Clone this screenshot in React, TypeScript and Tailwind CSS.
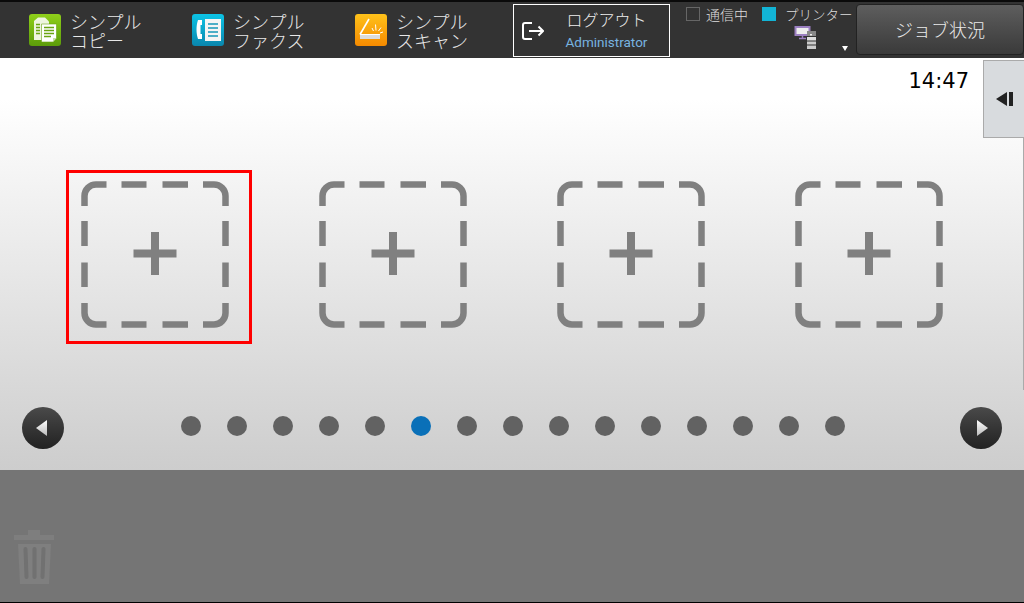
import React from "react";

const jp = "font-['Noto_Sans_CJK_JP','Noto_Sans',sans-serif]";

const CopyIcon = () => (
  <svg width="32" height="32" viewBox="0 0 32 32" aria-hidden="true">
    <defs>
      <linearGradient id="copyBg" x1="0" y1="0" x2="0" y2="1">
        <stop offset="0" stopColor="#8fd01a" />
        <stop offset="1" stopColor="#5c9c0a" />
      </linearGradient>
    </defs>
    <rect width="32" height="32" rx="3" fill="url(#copyBg)" />
    <path d="M5 7 9 3.500H16L20 7.500V26H5Z" fill="#eef5e0" />
    <path d="M12.500 10H27.500V24L24 28H12.500Z" fill="#fff" stroke="#6aa512" strokeWidth="0.6" />
    <path d="M24 28V24H27.500Z" fill="#c9dfa6" />
    <path d="M7 10.500h4M7 13.500h4M7 16.500h4M7 19.500h4" stroke="#6aa512" strokeWidth="1.3" />
    <path d="M15 13.500h10M15 16.500h10M15 19.500h10M15 22.500h7" stroke="#6aa512" strokeWidth="1.3" />
  </svg>
);

const FaxIcon = () => (
  <svg width="32" height="32" viewBox="0 0 32 32" aria-hidden="true">
    <defs>
      <linearGradient id="faxBg" x1="0" y1="0" x2="0" y2="1">
        <stop offset="0" stopColor="#0cc4e6" />
        <stop offset="1" stopColor="#0a86ad" />
      </linearGradient>
    </defs>
    <rect width="32" height="32" rx="3" fill="url(#faxBg)" />
    <rect x="13" y="5" width="16" height="22" fill="#f4f4f4" />
    <path d="M16 10h10M16 14h10M16 18h10M16 22h10" stroke="#1497b8" strokeWidth="1.6" />
    <path d="M6 6h4v5H8.500v9H10v5H6c-1-3-1.500-6-1.500-9.500S5 9 6 6z" fill="#fff" />
  </svg>
);

const ScanIcon = () => (
  <svg width="32" height="32" viewBox="0 0 32 32" aria-hidden="true">
    <defs>
      <linearGradient id="scanBg" x1="0" y1="0" x2="0" y2="1">
        <stop offset="0" stopColor="#ffc21a" />
        <stop offset="1" stopColor="#f58a00" />
      </linearGradient>
    </defs>
    <rect width="32" height="32" rx="3" fill="url(#scanBg)" />
    <path d="M5 20.500 14 5" stroke="#fff" strokeWidth="1.6" fill="none" />
    <path d="M5 20.500h20" stroke="#fff" strokeWidth="1" />
    <rect x="5" y="21" width="20" height="4" fill="#dcdcdc" />
    <path d="M18.500 17l-1.500-3M21 16.500l-.500-6M23.500 17l2.500-3.500M25 19l3-1" stroke="#fff" strokeWidth="1" />
  </svg>
);

const LogoutIcon = () => (
  <svg width="22" height="18" viewBox="0 0 22 18" fill="none" stroke="#fff" strokeWidth="2" aria-hidden="true">
    <path d="M10 1H3a2 2 0 0 0-2 2v12a2 2 0 0 0 2 2h7" />
    <path d="M7 9h14M16.500 4.500 21 9l-4.500 4.500" />
  </svg>
);

const PrinterIcon = () => (
  <svg width="26" height="26" viewBox="0 0 26 26" aria-hidden="true">
    <rect x="2.500" y="1" width="14" height="8" fill="#eee" stroke="#9b7fc0" strokeWidth="2" />
    <path d="M9.500 10v2M6 12.500h7" stroke="#9b7fc0" strokeWidth="1.500" />
    <rect x="14" y="5" width="9" height="18" fill="#333" />
    <rect x="14" y="5" width="9" height="5" fill="#888" />
    <rect x="17" y="8" width="2" height="1.500" fill="#eee" />
    <rect x="14" y="11" width="9" height="3.500" fill="#ddd" />
    <rect x="14" y="15.500" width="9" height="3" fill="#ccc" />
    <rect x="14" y="19.500" width="9" height="3.500" fill="#ccc" />
  </svg>
);

const AddSlot = () => (
  <svg width="148" height="147" viewBox="0 0 148 147" aria-hidden="true">
    <g fill="none" stroke="#808080" strokeWidth="6.500">
      <path d="M3.500 25V15A11.500 11.500 0 0 1 15 3.500H25.500" />
      <path d="M40.500 3.500H65.500M81.500 3.500H107" />
      <path d="M122 3.500H133A11.500 11.500 0 0 1 144.500 15V25" />
      <path d="M3.500 40V65M3.500 81.500V106" />
      <path d="M144.500 40V65M144.500 81.500V106" />
      <path d="M3.500 122V132A11.500 11.500 0 0 0 15 143.500H25.500" />
      <path d="M40.500 143.500H65.500M81.500 143.500H107" />
      <path d="M122 143.500H133A11.500 11.500 0 0 0 144.500 132V122" />
    </g>
    <path d="M74 51V94M52.500 72.500H95.500" stroke="#808080" strokeWidth="8" />
  </svg>
);

const TrashIcon = () => (
  <svg width="40" height="54" viewBox="0 0 40 54" aria-hidden="true">
    <rect x="14" y="0" width="12" height="5" fill="#7e7e7e" />
    <rect x="0" y="5" width="40" height="5" fill="#7e7e7e" />
    <path d="M4 14H37L35 54H6Z" fill="#7f7f7f" />
    <path d="M11.500 19l1 28M20.500 19v28M29.500 19l-1 28" stroke="#717171" strokeWidth="4" strokeLinecap="round" />
  </svg>
);

const NavButton = ({ dir }: { dir: "left" | "right" }) => (
  <button type="button" className="w-[42px] h-[42px] rounded-full bg-gradient-to-b from-[#4a4a4a] to-[#222] flex items-center justify-center">
    <svg width="14" height="16" viewBox="0 0 14 16" aria-hidden="true">
      <defs>
        <linearGradient id={`arrow-${dir}`} x1="0" y1="0" x2="0" y2="1">
          <stop offset="0" stopColor="#fff" />
          <stop offset="1" stopColor="#bbb" />
        </linearGradient>
      </defs>
      <path d={dir === "left" ? "M11 0V16L0 8Z" : "M3 0V16L14 8Z"} fill={`url(#arrow-${dir})`} />
    </svg>
  </button>
);

const modes = [
  { icon: <CopyIcon />, text: "シンプル\nコピー", width: "w-[163px]" },
  { icon: <FaxIcon />, text: "シンプル\nファクス", width: "w-[163px]" },
  { icon: <ScanIcon />, text: "シンプル\nスキャン", width: "w-[187px]" },
];

export default function App() {
  return (
    <div className={`w-[1024px] h-[603px] overflow-hidden flex flex-col ${jp}`}>
      {/* Top bar */}
      <header className="h-[58px] flex bg-[#333] border-t-2 border-[#0a0a0a] relative">
        {modes.map((m) => (
          <div key={m.text} className={`${m.width} flex items-center pl-[29px] gap-[9px]`}>
            {m.icon}
            <div className="text-[18px] leading-[19px] text-[#e8e8e8] font-light whitespace-pre-line mt-[1px]">{m.text}</div>
          </div>
        ))}

        <div className="w-[157px] h-[53px] mt-[2px] border border-white flex items-center">
          <div className="ml-[8px]">
            <LogoutIcon />
          </div>
          <div className="flex-1 text-center">
            <div className="text-[16px] leading-[23px] font-light text-[#eee]">ログアウト</div>
            <div className="text-[13.500px] leading-[23px] text-[#78b4e0] font-['Roboto',sans-serif]">Administrator</div>
          </div>
        </div>

        <div className="w-[186px] pl-[16px] relative">
          <div className="flex items-center h-[20px] mt-[2px] text-[#ddd] whitespace-nowrap">
            <span className="w-[14px] h-[14px] border border-[#666] mr-[6px]" />
            <span className="text-[14px] font-light">通信中</span>
            <span className="w-[14px] h-[14px] bg-[#12b4d6] ml-[14px] mr-[9px]" />
            <span className="text-[13.500px] font-light">プリンター</span>
          </div>
          <div className="absolute left-[123px] top-[24px]">
            <PrinterIcon />
          </div>
          <div className="absolute left-[172px] top-[44px] w-0 h-0 border-x-[3.500px] border-x-transparent border-t-[5px] border-t-white" />
        </div>

        <button
          type="button"
          className="w-[168px] h-[51px] mt-[2px] rounded-[4px] border border-[#222] bg-gradient-to-b from-[#5e5e5e] to-[#3a3a3a] text-[18px] font-light text-[#eaeaea]"
        >
          ジョブ状況
        </button>
      </header>

      {/* Home page area */}
      <main className="h-[412px] relative bg-gradient-to-b from-white from-[10%] to-[#cdcdcd] flex flex-col">
        <div className="absolute right-[55px] top-[9px] text-[21px] leading-[28px] text-black font-['DejaVu_Sans',sans-serif]">14:47</div>
        <button
          type="button"
          className="absolute right-0 top-[2px] w-[41px] h-[78px] bg-[#d8dbde] border border-[#aaa] border-r-0 flex items-center justify-center gap-[2px]"
        >
          <span className="w-0 h-0 border-y-[7px] border-y-transparent border-r-[11px] border-r-[#222]" />
          <span className="w-[4px] h-[14px] bg-[#222]" />
        </button>
        <div className="absolute right-0 top-[80px] w-px h-[252px] bg-[#aaa]" />

        <div className="grid grid-cols-4 w-[952px] ml-[43px] mt-[112px]">
          {[0, 1, 2, 3].map((i) => (
            <div
              key={i}
              className={`h-[174px] w-[186px] ml-[23px] border-[3px] pl-[12px] pt-[8px] ${i === 0 ? "border-[#f00]" : "border-transparent"}`}
            >
              <AddSlot />
            </div>
          ))}
        </div>

        <div className="flex items-center justify-between px-[22px] mt-[63px]">
          <NavButton dir="left" />
          <div className="flex gap-[26px] mb-[5px] ml-[2px]">
            {Array.from({ length: 15 }).map((_, i) => (
              <span key={i} className={`w-[20px] h-[20px] rounded-full ${i === 5 ? "bg-[#0a70b8]" : "bg-[#626262]"}`} />
            ))}
          </div>
          <NavButton dir="right" />
        </div>
      </main>

      {/* Trash zone */}
      <footer className="flex-1 bg-[#757575] border-b border-black pl-[14px] pt-[60px]">
        <TrashIcon />
      </footer>
    </div>
  );
}
